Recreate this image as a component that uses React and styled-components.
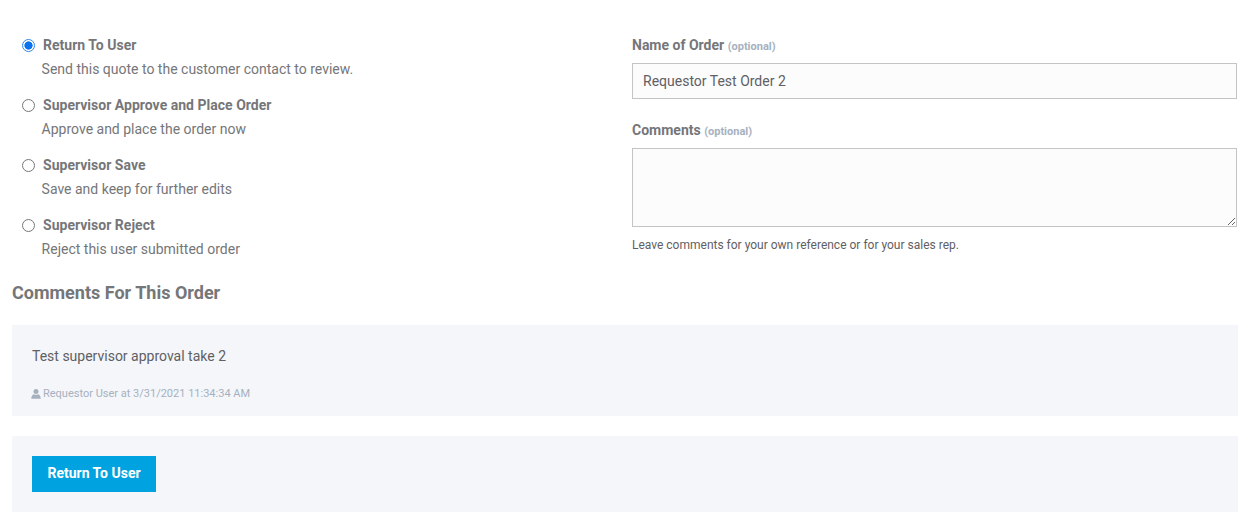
import React from 'react';
import styled, { createGlobalStyle } from 'styled-components';

const GlobalStyle = createGlobalStyle`
html, body {
    margin: 0;
    background: #fff;
    font-family: Roboto, "Liberation Sans", sans-serif;
    color: #757679;
}
`

const options = [
    { title: 'Return To User', text: 'Send this quote to the customer contact to review.', checked: true },
    { title: 'Supervisor Approve and Place Order', text: 'Approve and place the order now' },
    { title: 'Supervisor Save', text: 'Save and keep for further edits' },
    { title: 'Supervisor Reject', text: 'Reject this user submitted order' },
];

const UserIcon = () => (
    <svg width="10" height="10" viewBox="0 0 10 10" fill="currentColor">
        <circle cx="5" cy="2.6" r="2.5" />
        <path d="M0.3 9.8C0.3 7.2 1.3 5.6 2.9 5.2C4 6 6 6 7.1 5.2C8.7 5.6 9.7 7.2 9.7 9.8Z" />
    </svg>
);

const App = () => {
    return (
        <Page>
            <GlobalStyle />
            <FormRow>
                <OptionList>
                    {options.map((o) => (
                        <Option key={o.title}>
                            <OptionTitle>
                                <Radio type="radio" name="action" defaultChecked={o.checked} />
                                {o.title}
                            </OptionTitle>
                            <OptionText>{o.text}</OptionText>
                        </Option>
                    ))}
                </OptionList>
                <Fields>
                    <FieldLabel>Name of Order <small>(optional)</small></FieldLabel>
                    <TextInput defaultValue="Requestor Test Order 2" />
                    <FieldLabel $second>Comments <small>(optional)</small></FieldLabel>
                    <TextArea />
                    <Help>Leave comments for your own reference or for your sales rep.</Help>
                </Fields>
            </FormRow>
            <Heading>Comments For This Order</Heading>
            <CommentPanel>
                <CommentText>Test supervisor approval take 2</CommentText>
                <CommentMeta><UserIcon />Requestor User at 3/31/2021 11:34:34 AM</CommentMeta>
            </CommentPanel>
            <ActionPanel>
                <SubmitButton>Return To User</SubmitButton>
            </ActionPanel>
        </Page>
    );
};

export default App;

const Page = styled.div`
width: 1226px;
height: 524px;
margin-left: 12px;
overflow: hidden;
`

const FormRow = styled.div`
display: grid;
grid-template-columns: 620px 605px;
height: 270px;
padding-top: 24px;
box-sizing: border-box;
`

const OptionList = styled.div`
display: flex;
flex-direction: column;
padding: 12px 0 0 10px;
`

const Option = styled.div`
height: 60px;
`

const OptionTitle = styled.label`
display: flex;
align-items: center;
height: 18px;
font-size: 14px;
font-weight: 700;
line-height: 18px;
letter-spacing: 0.02px;
`

const Radio = styled.input`
appearance: none;
width: 13px;
height: 13px;
box-sizing: border-box;
margin: 0 8px 0 0;
border: 1px solid #767676;
border-radius: 50%;
background: #fff;
&:checked {
    border-color: #2f86ee;
    background: radial-gradient(circle, #0a72ee 0 3.8px, #fff 4.4px);
}
`

const OptionText = styled.div`
margin: 6px 0 0 19.6px;
font-size: 14px;
line-height: 18px;
`

const Fields = styled.div`
display: flex;
flex-direction: column;
padding-top: 12px;
`

const FieldLabel = styled.label`
height: 18px;
margin-top: ${(p) => (p.$second ? '22px' : '0')};
margin-bottom: 9px;
font-size: 14px;
font-weight: 700;
line-height: 18px;
small {
    font-size: 11px;
    color: #a6b1c0;
}
`

const TextInput = styled.input`
height: 36px;
box-sizing: border-box;
border: 1px solid #c4c4c4;
background: #fcfcfc;
padding: 0 10px;
font: 400 14px Roboto, sans-serif;
color: #5f6063;
outline: none;
`

const TextArea = styled.textarea`
height: 79px;
box-sizing: border-box;
border: 1px solid #c4c4c4;
background: #fcfcfc;
display: block;
outline: none;
`

const Help = styled.div`
margin-top: 10px;
font-size: 12px;
line-height: 16px;
color: #5f6063;
`

const Heading = styled.h2`
margin: 0;
font-size: 18px;
font-weight: 700;
line-height: 24px;
height: 55px;
box-sizing: border-box;
padding-top: 11px;
`

const CommentPanel = styled.div`
height: 91px;
box-sizing: border-box;
background: #f4f6fa;
padding: 22px 20px 0;
`

const CommentText = styled.div`
font-size: 14px;
line-height: 18px;
color: #5f6063;
`

const CommentMeta = styled.div`
display: flex;
align-items: center;
gap: 2px;
margin-top: 21px;
font-size: 11px;
line-height: 16px;
color: #a6b1c0;
svg {
    margin-left: -1px;
}
`

const ActionPanel = styled.div`
height: 76px;
margin-top: 20px;
box-sizing: border-box;
background: #f4f6fa;
padding: 20px;
`

const SubmitButton = styled.button`
width: 124px;
height: 36px;
border: 0;
padding: 0 0 2px;
background: #00a3e0;
color: #fff;
font: 700 14px Roboto, sans-serif;
`
